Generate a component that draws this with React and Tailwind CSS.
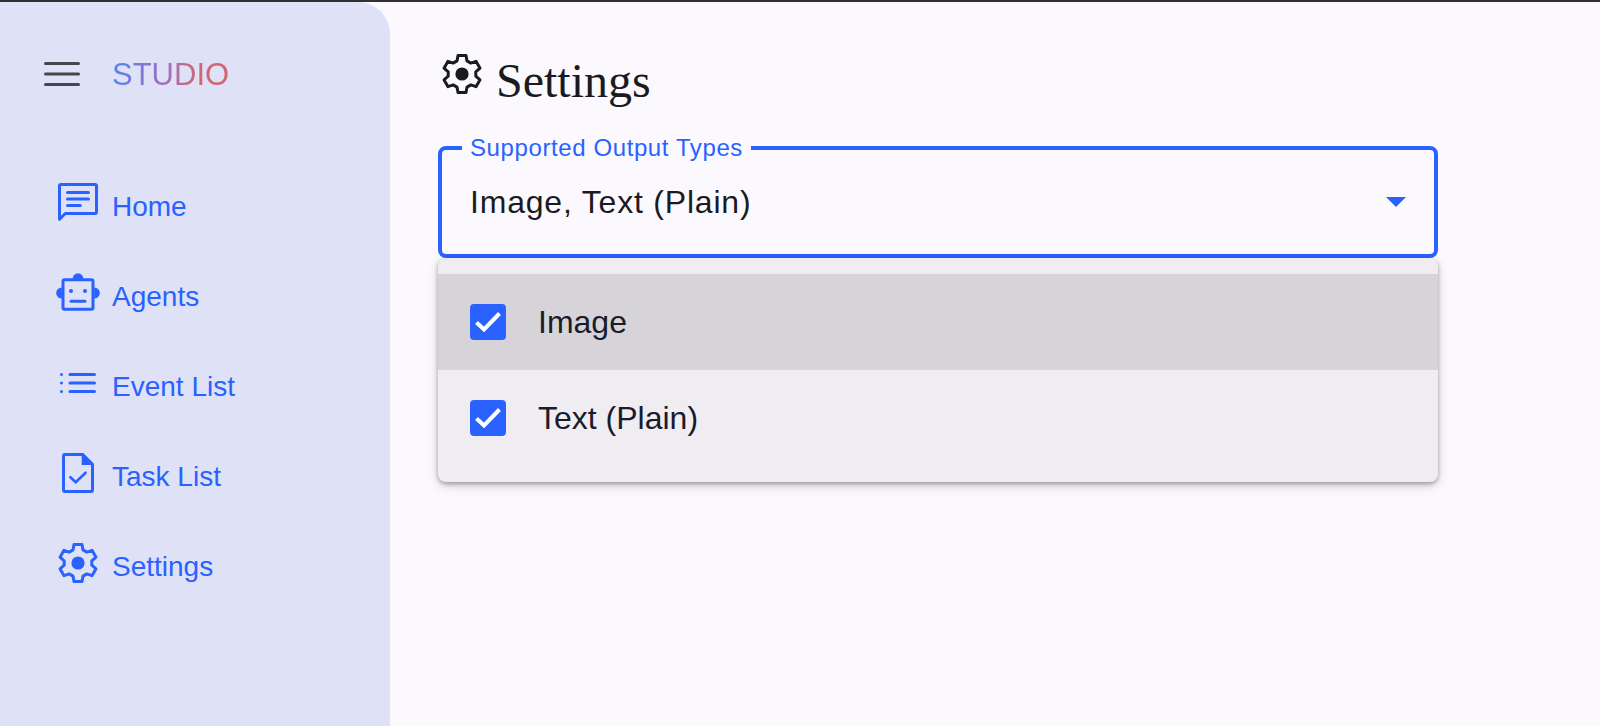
import React, { useState } from "react";

const OUTPUT_TYPES = ["Image", "Text (Plain)"];

const Icon = ({ children }) => (
  <svg
    viewBox="-24 -24 48 48"
    className="size-12 shrink-0"
    fill="none"
    stroke="currentColor"
    strokeWidth="3"
    strokeLinecap="round"
    strokeLinejoin="round"
    aria-hidden="true"
  >
    {children}
  </svg>
);

const ChatIcon = () => (
  <Icon>
    <path d="M-18.5 16.3V-17a1.5 1.5 0 0 1 1.5-1.5H17a1.5 1.5 0 0 1 1.5 1.5V9a1.5 1.5 0 0 1-1.5 1.5H-12.7Z" />
    <path d="M-10.5-10.6H10.5M-10.5-4H10.5M-10.5 2.5H2.3" />
  </Icon>
);

const RobotIcon = () => (
  <Icon>
    <rect x="-15" y="-13.3" width="30" height="29.6" rx="1.5" />
    <path d="M-7 8.3H7" />
    <g fill="currentColor" stroke="none">
      <path d="M-5.4-14.3a5.4 5.4 0 0 1 10.8 0Z" />
      <path d="M-16.2-5.6a5.6 5.6 0 0 0 0 11.2Z" />
      <path d="M16.2-5.6a5.6 5.6 0 0 1 0 11.2Z" />
      <circle cx="-7" cy="-2" r="2" />
      <circle cx="7" cy="-2" r="2" />
    </g>
  </Icon>
);

const ListIcon = () => (
  <Icon>
    <path d="M-8-8.5H16.5M-8 0H16.5M-8 8.5H16.5" />
    <g fill="currentColor" stroke="none">
      <circle cx="-16.5" cy="-8.5" r="1.5" />
      <circle cx="-16.5" cy="0" r="1.5" />
      <circle cx="-16.5" cy="8.5" r="1.5" />
    </g>
  </Icon>
);

const TaskIcon = () => (
  <Icon>
    <path d="M4.7-18.5H-13a1.5 1.5 0 0 0-1.5 1.5V17a1.5 1.5 0 0 0 1.5 1.5H13a1.5 1.5 0 0 0 1.5-1.5V-8.7Z" />
    <path d="M3.7-19.5V-8H15.5L5-19.5Z" fill="currentColor" stroke="none" />
    <path d="M-7.6 4.2L-2.3 9.3L7.6-.3" strokeWidth="2.6" />
  </Icon>
);

const GearIcon = () => (
  <Icon>
    <path d="M-4-18.5H4L5-13.1L8.8-10.9L14-12.7L18-5.8L13.8-2.2V2.2L18 5.8L14 12.7L8.8 10.9L5 13.1L4 18.5H-4L-5 13.1L-8.8 10.9L-14 12.7L-18 5.8L-13.8 2.2V-2.2L-18-5.8L-14-12.7L-8.8-10.9L-5-13.1Z" />
    <circle r="6.6" fill="currentColor" stroke="none" />
  </Icon>
);

const NAV_ITEMS = [
  { label: "Home", icon: ChatIcon },
  { label: "Agents", icon: RobotIcon },
  { label: "Event List", icon: ListIcon },
  { label: "Task List", icon: TaskIcon },
  { label: "Settings", icon: GearIcon },
];

const Sidebar = () => (
  <aside className="w-[390px] shrink-0 rounded-tr-[32px] bg-[#dfe1f6] pt-12">
    <div className="flex h-12 items-center gap-8 pl-11">
      <button type="button" aria-label="Menu" className="text-[#46464f]">
        <svg
          viewBox="0 0 36 24"
          className="h-6 w-9"
          stroke="currentColor"
          strokeWidth="3"
          strokeLinecap="round"
        >
          <path d="M1.5 1.5H34.5M1.5 12H34.5M1.5 22.5H34.5" />
        </svg>
      </button>
      <span className="bg-linear-to-r from-[#4a84f0] via-[#9670c8] via-40% to-[#d0666f] to-75% bg-clip-text pt-0.5 text-[31px] leading-10 text-transparent">
        STUDIO
      </span>
    </div>

    <nav className="mt-[81px] flex flex-col gap-[42px] pl-[54px]">
      {NAV_ITEMS.map(({ label, icon: NavIcon }) => (
        <a
          key={label}
          href="#"
          className="flex items-end gap-2.5 text-[28px] leading-10 text-[#2962ff]"
        >
          <NavIcon />
          {label}
        </a>
      ))}
    </nav>
  </aside>
);

const OutputTypesField = () => {
  const [selected, setSelected] = useState(OUTPUT_TYPES);
  const value = selected.join(", ");

  const toggle = (type) => {
    setSelected(
      OUTPUT_TYPES.filter((t) =>
        t === type ? !selected.includes(t) : selected.includes(t)
      )
    );
  };

  return (
    <div className="relative mt-6 w-full max-w-[1000px]">
      <fieldset className="rounded-lg border-4 border-[#2962ff] pb-2.5 pl-5">
        <legend className="px-2 text-2xl leading-6 tracking-wide text-[#2962ff]">
          <label htmlFor="output-types">Supported Output Types</label>
        </legend>
        <div className="flex items-center pr-7 pl-2">
          <select
            id="output-types"
            value={value}
            onChange={() => {}}
            className="h-[84px] min-w-0 flex-1 appearance-none text-[32px] tracking-wide text-[#1b1b1f] outline-none"
          >
            <option value={value}>{value}</option>
          </select>
          <svg
            viewBox="0 0 20 10"
            className="h-2.5 w-5 fill-[#2962ff]"
            aria-hidden="true"
          >
            <path d="M0 0H20L10 10Z" />
          </svg>
        </div>
      </fieldset>

      {/* Dropdown menu */}
      <ul className="absolute inset-x-0 top-full rounded-lg bg-[#efedf1] py-4 shadow-[0_2px_4px_rgba(0,0,0,0.3),0_4px_12px_rgba(0,0,0,0.15)]">
        {OUTPUT_TYPES.map((type, i) => (
          <li key={type} className={i === 0 ? "bg-[#d6d4d9]" : ""}>
            <label className="flex h-24 items-center gap-8 px-8 text-[32px] text-[#1a1b2c]">
              <span className="grid size-9 shrink-0">
                <input
                  type="checkbox"
                  checked={selected.includes(type)}
                  onChange={() => toggle(type)}
                  className="peer col-start-1 row-start-1 size-9 appearance-none rounded-sm border-4 border-[#46464f] checked:border-0 checked:bg-[#2962ff]"
                />
                <svg
                  viewBox="0 0 36 36"
                  className="pointer-events-none invisible col-start-1 row-start-1 size-9 peer-checked:visible"
                  fill="none"
                  stroke="white"
                  strokeWidth="4"
                  aria-hidden="true"
                >
                  <path d="M6.5 18.5L14 25.5L29.5 9.5" />
                </svg>
              </span>
              {type}
            </label>
          </li>
        ))}
      </ul>
    </div>
  );
};

const App = () => (
  <div className="flex min-h-screen flex-col border-t-2 border-[#313033] bg-[#fbf9fe] font-['Liberation_Sans',Arial,sans-serif]">
    <div className="flex flex-1">
      <Sidebar />
      <main className="min-w-0 flex-1 px-12 pt-12">
        <div className="flex items-start gap-2.5 text-[#1b1b1f]">
          <GearIcon />
          <h1 className="font-['Liberation_Serif','Times_New_Roman',serif] text-5xl leading-[62px]">
            Settings
          </h1>
        </div>
        <OutputTypesField />
      </main>
    </div>
  </div>
);

export default App;
